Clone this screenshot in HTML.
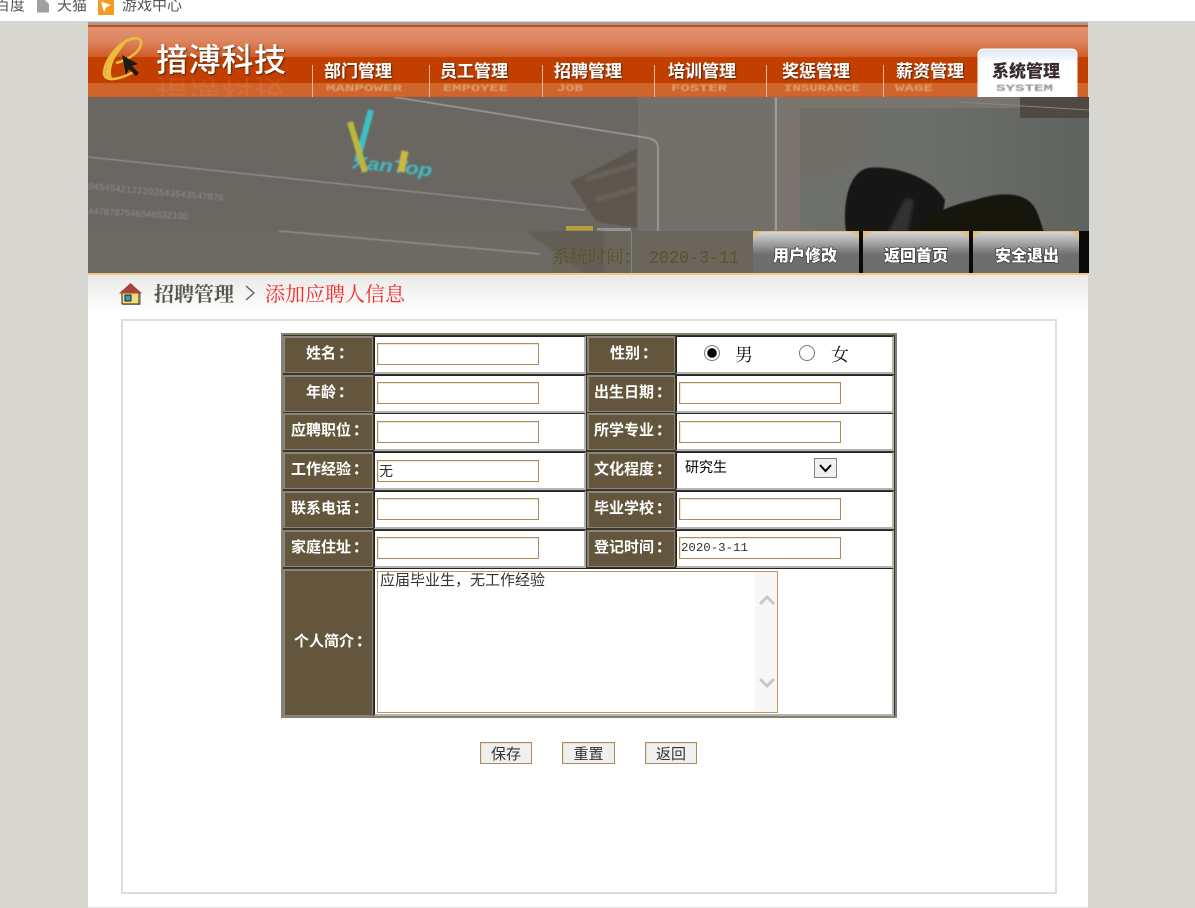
<!DOCTYPE html>
<html lang="zh-CN"><head><meta charset="utf-8"><title>添加应聘人信息</title>
<style>
html,body{margin:0;padding:0;width:1195px;height:908px;overflow:hidden;background:#d8d6d1;font-family:"Liberation Sans","WenQuanYi Zen Hei","Noto Sans CJK SC",sans-serif}
div,input,textarea,button,select,svg{position:absolute;box-sizing:border-box;margin:0}
.t{white-space:nowrap}
.top{color:#555;font-size:15px;line-height:14px;top:-1px}
.l{background:#63563c;border:1px solid #8a857a;border-top-width:2px;border-left-width:2px;width:90px}
.lr{left:587px;width:88px}
.v{background:#fff;border:solid;border-width:1px 2px 2px 1px;border-color:#26231d #b4b4b4 #b4b4b4 #26231d;left:374px;width:212px}
.vr{left:676px;width:218px}
.lt{color:#fff;font-weight:bold;font-size:15px;line-height:16px;white-space:nowrap;margin-top:1px}
.lt b{position:relative;left:2px}
input.i{left:377px;width:162px;height:22px;border:1px solid #b08a58;box-shadow:inset 1px 1px 0 #eee6da;background:#fff;color:#333;padding:1px 1px;font:14px "Liberation Sans","WenQuanYi Zen Hei","Noto Sans CJK SC",sans-serif;outline:none}
input.r{left:679px}
button{top:742px;height:22px;border:1px solid #b08a58;box-shadow:inset 1px 1px 0 #e8e0d4;background:#f0f0f0;color:#333;font:15px "Liberation Sans","WenQuanYi Zen Hei","Noto Sans CJK SC",sans-serif;padding:0}
.rad{appearance:none;-webkit-appearance:none;width:16px;height:16px;border:1px solid #767676;border-radius:50%;background:#fff;top:345px}
.rad:checked{background:radial-gradient(circle,#000 0 4.5px,#fff 5px)}
.gd{font:18px "Noto Serif CJK SC",serif;color:#111;top:342px;line-height:24px}
</style></head><body>

<!-- browser bookmark bar -->
<div style="left:0;top:0;width:1195px;height:21px;background:#fff;overflow:hidden">
  <div class="t top" style="left:-5px">百度</div>
  <svg style="left:37px;top:0" width="13" height="13" viewBox="0 0 13 13"><path d="M0 0H8L12 4V12.500H0Z" fill="#a0a0a0"/></svg>
  <div class="t top" style="left:57px">天猫</div>
  <svg style="left:98px;top:0" width="16" height="15" viewBox="0 0 16 15"><rect width="16" height="15" rx="1" fill="#f59a23"/><path d="M3 1.500L13 5L8 7.500L6 12Z" fill="#fff"/></svg>
  <div class="t top" style="left:122px">游戏中心</div>
</div>

<!-- page -->
<div style="left:88px;top:22px;width:1000px;height:886px;background:#fff;border-bottom:1px solid #e6e6e6"></div>

<!-- header -->
<svg style="left:88px;top:22px" width="1001" height="76" viewBox="88 22 1001 76">
  <defs>
    <linearGradient id="a" x1="0" y1="0" x2="0" y2="1"><stop offset="0" stop-color="#e0916f"/><stop offset=".45" stop-color="#dd8660"/><stop offset="1" stop-color="#cf5c26"/></linearGradient>
    <linearGradient id="tab" x1="0" y1="0" x2="0" y2="1"><stop offset="0" stop-color="#dbe8f8"/><stop offset=".3" stop-color="#fff"/></linearGradient>
    <filter id="b5"><feGaussianBlur stdDeviation=".5"/></filter>
    <filter id="b3"><feGaussianBlur stdDeviation=".35"/></filter>
    <filter id="sh" x="-10%" y="-10%" width="125%" height="130%"><feDropShadow dx="1" dy="1" stdDeviation=".7" flood-color="#3a1500" flood-opacity=".8"/></filter>
  </defs>
  <rect x="88" y="22" width="1000" height="4" fill="#a09e99"/>
  <rect x="88" y="25" width="1000" height="2" fill="#cc4c10"/>
  <rect x="88" y="27" width="1000" height="30" fill="url(#a)"/>
  <rect x="88" y="57" width="1000" height="26" fill="#c33f00"/>
  <rect x="88" y="83" width="1000" height="14" fill="#d0652c"/>
  <rect x="88" y="96" width="1000" height="1" fill="#d9581c"/>
  <!-- logo -->
  <path d="M116 63C128 60 140 52 141 44C142 37 134 37 126 41C114 48 105 62 104 72C103 82 118 81 135 71" fill="none" stroke="#edbb3d" stroke-width="2.600" filter="url(#b3)"/>
  <path d="M128 40C114 48 106 62 105.500 73C105 79 109 80 113 80C109 74 111 62 119 52Z" fill="#edbb3d" filter="url(#b3)"/>
  <path d="M122 55L126 75L129 69L136 76L139 73L132 66L138 64Z" fill="#1f1a16" filter="url(#b3)"/>
  <text x="156" y="71" font-family="'Noto Sans CJK SC',sans-serif" font-size="32" font-weight="500" fill="#fff" filter="url(#sh)" textLength="130">揞溥科技</text>
  <text x="156" y="-80" transform="scale(1 -1)" font-family="'Noto Sans CJK SC',sans-serif" font-size="32" fill="#fff" opacity=".06" textLength="130">揞溥科技</text>
  <!-- separators -->
  <g stroke="#eeb596" stroke-width="1"><path d="M312.500 65V97M429.500 65V97M542.500 65V97M654.500 65V97M766.500 65V97M883.500 65V97"/></g>
  <!-- tab -->
  <path d="M978 97V55Q978 49 984 49H1071Q1077 49 1077 55V97Z" fill="url(#tab)" stroke="#fff"/>
  <!-- nav -->
  <g font-family="'Noto Sans CJK SC',sans-serif" font-size="17" fill="#fff" filter="url(#sh)" font-weight="700">
    <text x="324" y="77">部门管理</text><text x="440" y="77">员工管理</text><text x="554" y="77">招聘管理</text><text x="668" y="77">培训管理</text><text x="782" y="77">奖惩管理</text><text x="896" y="77">薪资管理</text>
  </g>
  <text x="992" y="77" font-family="'Noto Sans CJK SC',sans-serif" font-size="17" font-weight="900" fill="#3a2c2e">系统管理</text>
  <g font-family="'Liberation Mono',monospace" font-size="10.500" font-weight="700" fill="#dd9f70" filter="url(#b5)">
    <text x="326" y="91" textLength="76" lengthAdjust="spacingAndGlyphs">MANPOWER</text>
    <text x="443" y="91" textLength="65" lengthAdjust="spacingAndGlyphs">EMPOYEE</text>
    <text x="557" y="91" textLength="26" lengthAdjust="spacingAndGlyphs">JOB</text>
    <text x="671" y="91" textLength="56" lengthAdjust="spacingAndGlyphs">FOSTER</text>
    <text x="784" y="91" textLength="76" lengthAdjust="spacingAndGlyphs">INSURANCE</text>
    <text x="895" y="91" textLength="38" lengthAdjust="spacingAndGlyphs">WAGE</text>
    <text x="996" y="91" textLength="57" lengthAdjust="spacingAndGlyphs" fill="#8f9196">SYSTEM</text>
  </g>
</svg>

<!-- banner -->
<svg style="left:88px;top:97px" width="1001" height="177" viewBox="88 97 1001 177">
  <defs><filter id="b1"><feGaussianBlur stdDeviation=".8"/></filter><filter id="b2"><feGaussianBlur stdDeviation="1.500"/></filter><filter id="b4"><feGaussianBlur stdDeviation=".5"/></filter>
  <linearGradient id="bt" x1="0" y1="0" x2="0" y2="1"><stop offset="0" stop-color="#d6d6d6"/><stop offset=".55" stop-color="#6f6f6f"/><stop offset="1" stop-color="#6c6c6c"/></linearGradient>
  <linearGradient id="wl" x1="0" y1="0" x2="1" y2="0"><stop offset="0" stop-color="#6f716d"/><stop offset=".5" stop-color="#6b6d69"/><stop offset="1" stop-color="#5f625f"/></linearGradient></defs>
  <rect x="88" y="97" width="1001" height="176" fill="#6a6763"/>
  <rect x="638" y="97" width="140" height="134" fill="#72706a"/>
  <rect x="778" y="97" width="311" height="11" fill="#79756e"/>
  <rect x="778" y="97" width="22" height="134" fill="#79756e"/>
  <rect x="800" y="108" width="289" height="123" fill="url(#wl)"/>
  <path d="M800 108H867V148Q860 172 800 182Z" fill="#716e68" filter="url(#b4)"/>
  <rect x="1020" y="97" width="69" height="21" fill="#4f4942"/>
  <path d="M960 102L1089 110" stroke="#8a857d" stroke-width="1"/>
  <!-- lines -->
  <g fill="none" stroke="#a09e9a" stroke-width="1" filter="url(#b4)">
    <path d="M394 97L648 138Q658 140 658 148V231" stroke="#bcbab6"/>
    <path d="M88 157L585 210"/>
    <path d="M776 97V231" stroke="#b8b6b2" stroke-width="1.500"/>
  </g>
  <!-- logo -->
  <g filter="url(#b1)">
    <path d="M371 110L357 162" stroke="#3cc0c4" stroke-width="6"/>
    <text transform="translate(352 168) rotate(6)" font-family="'Liberation Sans',sans-serif" font-style="italic" font-weight="700" font-size="18" fill="#3cbcc2" textLength="80" lengthAdjust="spacingAndGlyphs">XanTop</text>
    <path d="M350 122L365 172" stroke="#bcb83c" stroke-width="6"/>
    <path d="M405 151L401 172" stroke="#c8bb3c" stroke-width="7"/>
  </g>
  <!-- numbers -->
  <g font-family="'Liberation Sans',sans-serif" font-size="9" fill="#8f8d89" filter="url(#b4)">
    <text x="88" y="189" transform="rotate(5 88 189)" textLength="136">0454542121202543543547876</text>
    <text x="88" y="214" transform="rotate(3 88 214)" textLength="100">4478787546546532100</text>
  </g>
  <!-- wedge -->
  <path d="M637 148L570 182L597 222L637 228Z" fill="#5b564d" filter="url(#b1)"/>
  <path d="M585 180L637 164M595 200L637 188" stroke="#6b6860" stroke-width="4" filter="url(#b2)"/>
  <rect x="566" y="226" width="27" height="5" fill="#b5a040"/>
  <rect x="597" y="228" width="34" height="3" fill="#8f9595"/>
  <!-- hat & hair -->
  <path d="M846 232C842 200 850 172 868 168C890 165 930 175 945 200L940 232Z" fill="#121212" filter="url(#b4)"/>
  <path d="M905 198L914 200L908 232H888Z" fill="#303232" filter="url(#b2)"/>
  <path d="M918 232C925 215 950 205 975 200C1000 192 1028 190 1037 212C1040 220 1042 226 1044 232Z" fill="#15130f" filter="url(#b4)"/>
  <!-- strip -->
  <rect x="88" y="231" width="665" height="42" fill="#6d6a65"/>
  <rect x="552" y="231" width="201" height="42" fill="#6a665b"/>
  <path d="M524 231H604V273H585Z" fill="#635e57" filter="url(#b1)"/>
  <path d="M279 231L540 254" stroke="#a09e9a" stroke-width="1" filter="url(#b4)"/>
  <path d="M631.500 231V273" stroke="#85837e"/>
  <text x="552" y="263" font-family="'Noto Serif CJK SC','Liberation Serif',serif" font-size="18" fill="#56542a">系统时间：</text>
  <text x="649" y="263" font-family="'Liberation Mono',monospace" font-size="18" fill="#56542e" textLength="90" lengthAdjust="spacingAndGlyphs">2020-3-11</text>
  <rect x="859" y="231" width="230" height="42" fill="#0a0a0a"/>
  <!-- buttons -->
  <g>
    <rect x="753" y="231" width="106" height="42" fill="#e8bf72"/><path d="M753 273V243Q753 232 765 232H847Q859 232 859 243V273Z" fill="url(#bt)"/>
    <rect x="863" y="231" width="106" height="42" fill="#e8bf72"/><path d="M863 273V243Q863 232 875 232H957Q969 232 969 243V273Z" fill="url(#bt)"/>
    <rect x="973" y="231" width="106" height="42" fill="#e8bf72"/><path d="M973 273V243Q973 232 985 232H1067Q1079 232 1079 243V273Z" fill="url(#bt)"/>
  </g>
  <g font-family="'Noto Sans CJK SC',sans-serif" font-size="16" font-weight="900" fill="#fff" stroke="#2e2e2e" stroke-width="1.200" paint-order="stroke">
    <text x="773" y="261">用户修改</text><text x="884" y="261">返回首页</text><text x="995" y="261">安全退出</text>
  </g>
</svg>
<div style="left:88px;top:273px;width:1001px;height:2px;background:#f3ca82"></div>
<div style="left:88px;top:275px;width:1000px;height:38px;background:linear-gradient(#e9e9e7,#fff)"></div>

<!-- breadcrumb -->
<svg style="left:118px;top:282px" width="26" height="24" viewBox="0 0 26 24">
  <rect x="5" y="10" width="18" height="13" fill="#b5b096"/>
  <rect x="4" y="9" width="17" height="13" fill="#f0dc78" stroke="#2a2a20"/>
  <rect x="7" y="13" width="6" height="6" fill="#2f9ec8" stroke="#222"/>
  <path d="M12.500 1L1 11.500H24Z" fill="#a8443a"/>
</svg>
<div class="t" style="left:154px;top:281px;font:bold 20px/24px 'Noto Serif CJK SC',serif;color:#595650">招聘管理</div>
<svg style="left:244px;top:284px" width="12" height="18" viewBox="0 0 12 18"><path d="M2 2L10 9L2 16" fill="none" stroke="#556" stroke-width="1.200"/></svg>
<div class="t" style="left:265px;top:281px;font:20px/24px 'Noto Serif CJK SC',serif;color:#f52a2a">添加应聘人信息</div>

<!-- content box -->
<div style="left:121px;top:319px;width:936px;height:575px;border:2px solid #dedede;background:#fff"></div>

<!-- form table -->
<div style="left:281px;top:333px;width:616px;height:385px;background:#3a342a;border:2px solid #85816f"></div>

<div class="l" style="left:283px;top:336px;height:37px"></div><div class="lt" style="left:306px;top:345px">姓名<b>：</b></div>
<div class="v" style="top:336px;height:38px"></div><input class="i" style="top:343px" type="text">
<div class="l lr" style="top:336px;height:37px"></div><div class="lt" style="left:610px;top:345px">性别<b>：</b></div>
<div class="v vr" style="top:336px;height:38px"></div>
<input class="rad" type="radio" name="g" checked style="left:704px"><div class="gd t" style="left:735px">男</div>
<input class="rad" type="radio" name="g" style="left:799px"><div class="gd t" style="left:831px">女</div>

<div class="l" style="left:283px;top:375px;height:37px"></div><div class="lt" style="left:306px;top:384px">年龄<b>：</b></div>
<div class="v" style="top:375px;height:38px"></div><input class="i" style="top:382px" type="text">
<div class="l lr" style="top:375px;height:37px"></div><div class="lt" style="left:594px;top:384px">出生日期<b>：</b></div>
<div class="v vr" style="top:375px;height:38px"></div><input class="i r" style="top:382px" type="text">

<div class="l" style="left:283px;top:413px;height:37px"></div><div class="lt" style="left:291px;top:422px">应聘职位<b>：</b></div>
<div class="v" style="top:413px;height:38px"></div><input class="i" style="top:421px" type="text">
<div class="l lr" style="top:413px;height:37px"></div><div class="lt" style="left:594px;top:422px">所学专业<b>：</b></div>
<div class="v vr" style="top:413px;height:38px"></div><input class="i r" style="top:421px" type="text">

<div class="l" style="left:283px;top:452px;height:37px"></div><div class="lt" style="left:291px;top:461px">工作经验<b>：</b></div>
<div class="v" style="top:452px;height:38px"></div><input class="i" style="top:460px" type="text" value="无">
<div class="l lr" style="top:452px;height:37px"></div><div class="lt" style="left:594px;top:461px">文化程度<b>：</b></div>
<div class="v vr" style="top:452px;height:38px"></div>
<div class="t" style="left:685px;top:459px;font-size:14px;line-height:17px;color:#000">研究生</div>
<svg style="left:814px;top:458px" width="23" height="20" viewBox="0 0 23 20"><rect x=".5" y=".5" width="22" height="19" fill="#f0f0f0" stroke="#808080"/><path d="M6 7L11.500 13L17 7" fill="none" stroke="#000" stroke-width="2"/></svg>

<div class="l" style="left:283px;top:491px;height:37px"></div><div class="lt" style="left:291px;top:500px">联系电话<b>：</b></div>
<div class="v" style="top:491px;height:38px"></div><input class="i" style="top:498px" type="text">
<div class="l lr" style="top:491px;height:37px"></div><div class="lt" style="left:594px;top:500px">毕业学校<b>：</b></div>
<div class="v vr" style="top:491px;height:38px"></div><input class="i r" style="top:498px" type="text">

<div class="l" style="left:283px;top:530px;height:37px"></div><div class="lt" style="left:291px;top:539px">家庭住址<b>：</b></div>
<div class="v" style="top:530px;height:38px"></div><input class="i" style="top:537px" type="text">
<div class="l lr" style="top:530px;height:37px"></div><div class="lt" style="left:594px;top:539px">登记时间<b>：</b></div>
<div class="v vr" style="top:530px;height:38px"></div><input class="i r" style="top:537px;font:12.400px 'Liberation Mono',monospace" type="text" value="2020-3-11">

<div class="l" style="left:283px;top:569px;height:147px"></div><div class="lt" style="left:294px;top:633px">个人简介<b>：</b></div>
<div style="left:374px;top:568px;width:520px;height:148px;background:#fff;border:solid;border-width:1px 2px 2px 1px;border-color:#26231d #b4b4b4 #b4b4b4 #26231d"></div>
<textarea style="left:377px;top:571px;width:401px;height:142px;border:1px solid #bb9668;background:#fff;color:#333;padding:1px 2px;font:15px/16px 'Liberation Sans','WenQuanYi Zen Hei','Noto Sans CJK SC',sans-serif;resize:none;overflow:hidden;outline:none">应届毕业生，无工作经验</textarea>
<svg style="left:755px;top:572px" width="22" height="140" viewBox="0 0 22 140"><rect width="22" height="140" fill="#f7f7f7"/><path d="M5 32L12 25L19 32M5 107L12 114L19 107" fill="none" stroke="#c8c8c8" stroke-width="3"/></svg>

<button style="left:480px;width:52px">保存</button>
<button style="left:562px;width:53px">重置</button>
<button style="left:645px;width:52px">返回</button>
</body></html>
